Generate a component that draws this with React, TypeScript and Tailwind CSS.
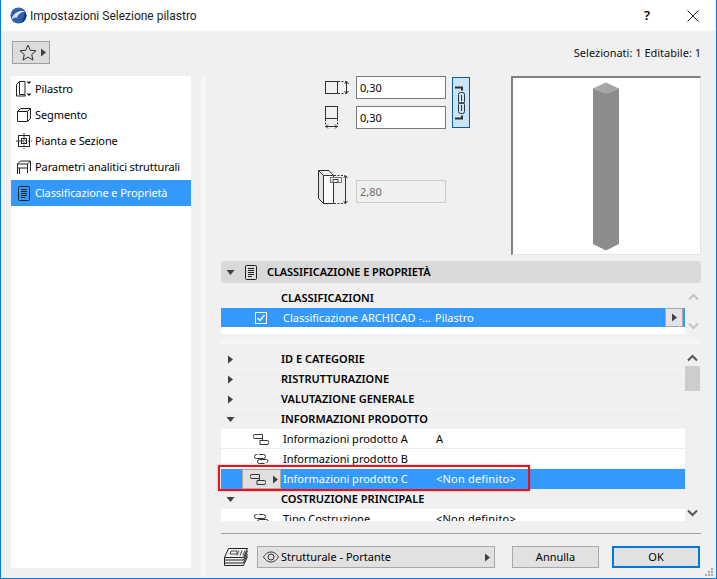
import { ReactNode } from "react"

const FONT = "font-['Noto_Sans','Open_Sans',sans-serif]"

function Tri({ dir, className = "" }: { dir: "right" | "down"; className?: string }) {
  return (
    <svg width="9" height="9" viewBox="0 0 9 9" className={className}>
      {dir === "right" ? <path d="M2 0.5 L7 4.500 L2 8.500 Z" fill="#404040" /> : <path d="M0.500 2 L8.500 2 L4.500 7 Z" fill="#404040" />}
    </svg>
  )
}

function Chevron({ up, color }: { up?: boolean; color: string }) {
  return (
    <svg width="11" height="8" viewBox="0 0 11 8">
      <path d={up ? "M1 6.500 L5.500 2 L10 6.500" : "M1 1.500 L5.500 6 L10 1.500"} fill="none" stroke={color} strokeWidth="2" />
    </svg>
  )
}

function Logo() {
  return (
    <svg width="17" height="17" viewBox="0 0 17 17">
      <circle cx="8.500" cy="8.500" r="8" fill="#2f5fb0" />
      <path d="M1 13 C4 5 10 3 15 4.500 C11 5 8 7 7 11 C5 10 3 11 1 13 Z" fill="#dfe9f7" />
      <path d="M11 16 C13 12 14 8 15 5 L16.500 8 C16.500 12 14 15 11 16 Z" fill="#173a7a" />
    </svg>
  )
}

function DocIcon() {
  return (
    <svg width="14" height="17" viewBox="0 0 14 17" fill="none" stroke="#222">
      <rect x="1.500" y="1.500" width="11" height="14" rx="1" />
      <path d="M4 4.500h6M4 6.500h6M4 8.500h6M4 10.500h6M4 12.500h4" />
    </svg>
  )
}

const navIcons: Record<string, ReactNode> = {
  Pilastro: (
    <svg width="17" height="18" viewBox="0 0 17 18" fill="none" stroke="#222">
      <path d="M4.500 1.500h5.500v13H4.500zM1.500 4.500l3-3M1.500 4.500v11.500h9l-1-1.500" />
      <path d="M11.500 1.500h5l-2.500 2.500zM11.500 13.500h5l-2.500 2.500z" fill="#222" stroke="none" />
    </svg>
  ),
  Segmento: (
    <svg width="16" height="16" viewBox="0 0 16 16" fill="none" stroke="#222">
      <path d="M1.500 4.500l3-3h10v10l-3 3h-10zM1.500 4.500h10v10M11.500 4.500l3-3" />
      <path d="M4 2.500l-1 1M7 2.500l-1 1M10 2.500l-1 1M13 2.500l-1 1" stroke="#777" />
    </svg>
  ),
  "Pianta e Sezione": (
    <svg width="16" height="16" viewBox="0 0 16 16" fill="none" stroke="#222">
      <rect x="2.500" y="2.500" width="11" height="11" />
      <rect x="5.500" y="5.500" width="5" height="5" />
      <path d="M8 0v16M0 8h16" strokeDasharray="2 1" strokeWidth="0.900" />
    </svg>
  ),
  "Parametri analitici strutturali": (
    <svg width="16" height="16" viewBox="0 0 16 16" fill="none" stroke="#222">
      <path d="M1.500 15V5l3-3h10v10M1.500 5h10v5M1.500 9h10M11.500 5l3-3M3.500 9v6M11.500 9v5" />
    </svg>
  ),
  "Classificazione e Proprietà": <DocIcon />,
}

const navItems = ["Pilastro", "Segmento", "Pianta e Sezione", "Parametri analitici strutturali", "Classificazione e Proprietà"]

function SizeIconH() {
  return (
    <svg width="26" height="14" viewBox="0 0 26 14" fill="none" stroke="#2b3338">
      <rect x="0.500" y="0.500" width="12" height="12" />
      <path d="M13 0.500h8M13 12.500h8" strokeDasharray="2 1.500" />
      <path d="M21.500 1v11M19.500 3l2-2.500 2 2.500M19.500 10l2 2.500 2-2.500" />
    </svg>
  )
}

function SizeIconV() {
  return (
    <svg width="14" height="24" viewBox="0 0 14 24" fill="none" stroke="#2b3338">
      <rect x="0.500" y="0.500" width="12" height="12" />
      <path d="M0.500 13v8M12.500 13v8" strokeDasharray="2 1.500" />
      <path d="M1 20.500h11M3 18.500l-2 2 2 2M10 18.500l2 2-2 2" />
    </svg>
  )
}

function HeightIcon() {
  return (
    <svg width="31" height="34" viewBox="0 0 31 34" fill="none" stroke="#2b3338">
      <path d="M0.500 0.500l5 5V33.500l-5-5z" fill="#e4e4e4" />
      <path d="M0.500 0.500h10.500l4.500 5H5.500z" fill="#f6f6f6" />
      <path d="M5.500 5.500h10V33.500H5.500z" fill="#fafafa" />
      <path d="M16 5.500h11M16 33.500h11" strokeDasharray="2 1.500" />
      <path d="M27.500 6v27M25.500 8l2-2.500 2 2.500M25.500 31l2 2.500 2-2.500" />
      <rect x="12.500" y="7.500" width="11" height="5" fill="#f0f0f0" stroke="#777" />
      <path d="M15 9.500h5v3h-5z" stroke="#444" />
    </svg>
  )
}

function LinkOpen() {
  return (
    <svg width="16" height="11" viewBox="0 0 16 11" fill="none" stroke="#333">
      <path d="M2 0.500h7.500v4H2a2 2 0 0 1 0-4zM7 6.500h7a2 2 0 0 1 0 4H7v-4zM9.500 4.500v2" />
    </svg>
  )
}

function LinkClosed() {
  return (
    <svg width="15" height="10" viewBox="0 0 15 10" fill="none" stroke="#333">
      <path d="M5 0.500h4.500a2 2 0 0 1 0 4H2.500a1.500 1.500 0 0 1-0-4h1M10.500 9.500H5.500a2 2 0 0 1 0-4h7a1.500 1.500 0 0 1 0 3" />
    </svg>
  )
}

function VLink() {
  return (
    <svg width="12" height="34" viewBox="0 0 12 34" fill="none" stroke="#2b3338">
      <path d="M0 1.500h7v3M0 32.500h7v-3" strokeWidth="2" />
      <rect x="3.500" y="6.500" width="6" height="11" rx="2" />
      <rect x="3.500" y="16.500" width="6" height="11" rx="2" />
      <path d="M6.500 9v6M6.500 19v6" />
    </svg>
  )
}

function GroupRow({ label, open }: { label: string; open?: boolean }) {
  return (
    <div className="flex h-5 shrink-0 items-center border-b border-[#f5f5f5] bg-[#f0f0f0] pt-[1px]">
      <div className="flex w-[60px] pl-[5px]">
        <Tri dir={open ? "down" : "right"} />
      </div>
      <span className="text-[11px] font-semibold text-black">{label}</span>
    </div>
  )
}

function ItemRow({ label, value, open }: { label: string; value?: string; open?: boolean }) {
  return (
    <div className="flex h-5 shrink-0 items-center border-b border-[#eeeeee] bg-white pt-[1px]">
      <div className="flex w-[60px] justify-center pl-[20px]">{open ? <LinkOpen /> : <LinkClosed />}</div>
      <span className="ml-[2px] w-[153px] text-[11px] text-black">{label}</span>
      <span className="text-[11px] tracking-[0.2px] text-black">{value}</span>
    </div>
  )
}

export default function App() {
  return (
    <div className={`${FONT} relative flex h-[579px] w-[717px] flex-col overflow-hidden border-x border-b border-[#0a7bd6] bg-[#f0f0f0] text-black`}>
      {/* title bar */}
      <div className="flex h-[31px] shrink-0 items-center bg-white pl-[9px]">
        <Logo />
        <span className="ml-[3px] font-['Roboto',sans-serif] text-[12px] text-[#222]">Impostazioni Selezione pilastro</span>
        <span className="ml-auto mr-[37px] text-[13px] font-semibold">?</span>
        <svg width="12" height="12" viewBox="0 0 12 12" className="mr-[17px]" stroke="#222" fill="none">
          <path d="M0.500 0.500l11 11M11.500 0.500l-11 11" />
        </svg>
      </div>

      {/* star + selection count */}
      <div className="flex h-[45px] shrink-0 items-center justify-between pl-[11px] pr-[15px]">
        <div className="mt-[-3px] flex h-[23px] w-[38px] items-center gap-[2px] border border-[#a0a0a0] bg-[#dcdcdc] pl-[6px]">
          <svg width="18" height="17" viewBox="0 0 18 17" fill="none" stroke="#333">
            <path d="M9 1l2.300 5.300 5.700.5-4.300 3.700 1.300 5.600L9 13.100 4 16.100l1.300-5.600L1 6.800l5.700-.5z" />
          </svg>
          <Tri dir="right" />
        </div>
        <span className="text-[11px] text-[#111]">Selezionati: 1 Editabile: 1</span>
      </div>

      <div className="flex min-h-0 flex-1">
        {/* sidebar */}
        <div className="mb-[10px] ml-[10px] w-[180px] shrink-0 bg-white">
          {navItems.map((item, i) => {
            const active = i === 4
            return (
              <div key={item} className={`flex h-[26px] items-center ${active ? "bg-[#3399ff] text-white" : "text-black"}`}>
                <div className="flex w-[24px] justify-center pl-[1px]">{navIcons[item]}</div>
                <span className="text-[11px] tracking-[-0.1px]">{item}</span>
              </div>
            )
          })}
        </div>

        <div className="ml-[10px] w-[5px] shrink-0 bg-[#f5f5f5]" />

        {/* right panel */}
        <div className="ml-[15px] flex w-[480px] shrink-0 flex-col">
          <div className="flex h-[179px] shrink-0">
            <div className="flex w-[290px] flex-col">
              <div className="flex">
                <div className="flex w-[135px] flex-col items-end">
                  <div className="flex h-[23px] w-[31px] items-center pt-[1px]">
                    <SizeIconH />
                  </div>
                  <div className="mt-[7px] flex h-[23px] w-[31px]">
                    <SizeIconV />
                  </div>
                </div>
                <div className="flex flex-col gap-[7px]">
                  <div className="flex h-[23px] w-[90px] items-center border border-[#7a7a7a] bg-white pl-[3px] pt-[2px] text-[11px]">0,30</div>
                  <div className="flex h-[23px] w-[90px] items-center border border-[#7a7a7a] bg-white pl-[3px] pt-[2px] text-[11px]">0,30</div>
                </div>
                <div className="ml-[6px] mt-[1px] flex h-[51px] w-[18px] items-center justify-center border border-[#0b5a9e] bg-[#cce4f7]">
                  <VLink />
                </div>
              </div>
              <div className="mt-[41px] flex items-end">
                <div className="flex w-[135px] justify-end">
                  <div className="w-[38px]">
                    <HeightIcon />
                  </div>
                </div>
                <div className="mb-[1px] flex h-[23px] w-[90px] items-center border border-[#cccccc] bg-[#f0f0f0] pl-[3px] pt-[2px] text-[11px] text-[#6d6d6d]">2,80</div>
              </div>
            </div>
            <div className="flex w-[190px] items-start justify-center border-2 border-r border-b border-[#808080] border-r-[#e3e3e3] border-b-[#e3e3e3] bg-white pr-[2px]">
              <svg width="28" height="170" viewBox="0 0 28 170" className="mt-[4px]">
                <path d="M1 6.500 L14 0.500 L27 6.500 L14 11.500 Z" fill="#a5a5a5" />
                <path d="M1 6.500 L14 11.500 L27 6.500 V162 L14 168.500 L1 162 Z" fill="#8c8c8c" />
              </svg>
            </div>
          </div>

          {/* section header */}
          <div className="mt-[6px] flex h-[22px] shrink-0 items-center rounded-[3px] bg-[#d9d9d9] pl-[5px]">
            <Tri dir="down" />
            <div className="ml-[9px] flex w-[14px]">
              <DocIcon />
            </div>
            <span className="ml-[9px] text-[11px] font-semibold tracking-[-0.1px]">CLASSIFICAZIONE E PROPRIETÀ</span>
          </div>

          {/* classification list */}
          <div className="mt-[5px] flex h-[46px] shrink-0">
            <div className="flex w-[464px] flex-col bg-white">
              <div className="flex h-5 items-center bg-[#f0f0f0] pl-[60px] text-[11px] font-semibold">CLASSIFICAZIONI</div>
              <div className="flex h-[19px] items-center bg-[#3399ff] text-white">
                <div className="flex w-[62px] justify-end pr-[16px]">
                  <svg width="12" height="12" viewBox="0 0 12 12" fill="none" stroke="#fff">
                    <rect x="0.500" y="0.500" width="11" height="11" />
                    <path d="M2.500 6l2.500 2.500 4.500-5.500" strokeWidth="1.500" />
                  </svg>
                </div>
                <span className="mt-[2px] w-[152px] truncate text-[11px]">Classificazione ARCHICAD -...</span>
                <span className="mt-[2px] text-[11px]">Pilastro</span>
                <div className="ml-auto mr-[2px] flex h-[19px] w-[18px] items-center justify-center border border-[#a8a8a8] bg-[#e4e4e4]">
                  <Tri dir="right" />
                </div>
              </div>
            </div>
            <div className="flex w-[16px] flex-col items-center justify-between pb-[4px] pt-[5px]">
              <Chevron up color="#c4c4c4" />
              <Chevron color="#c4c4c4" />
            </div>
          </div>

          <div className="mt-[5px] h-[5px] shrink-0 bg-[#f5f5f5]" />

          {/* property list */}
          <div className="relative mt-[5px] flex h-[172px] shrink-0">
            <div className="flex w-[464px] flex-col overflow-hidden bg-white">
              <GroupRow label="ID E CATEGORIE" />
              <GroupRow label="RISTRUTTURAZIONE" />
              <GroupRow label="VALUTAZIONE GENERALE" />
              <GroupRow label="INFORMAZIONI PRODOTTO" open />
              <ItemRow label="Informazioni prodotto A" value="A" open />
              <ItemRow label="Informazioni prodotto B" />
              <div className="flex h-5 shrink-0 items-center bg-[#3399ff] text-white">
                <div className="ml-[21px] flex h-[20px] w-[39px] items-center border border-[#a8a8a8] bg-[#e0e0e0] pl-[7px]">
                  <LinkOpen />
                  <Tri dir="right" className="ml-[5px]" />
                </div>
                <span className="ml-[2px] w-[153px] text-[11px]">Informazioni prodotto C</span>
                <span className="text-[11px] tracking-[0.2px]">&lt;Non definito&gt;</span>
              </div>
              <GroupRow label="COSTRUZIONE PRINCIPALE" open />
              <ItemRow label="Tipo Costruzione" value="<Non definito>" />
            </div>
            <div className="flex w-[15px] flex-col items-center bg-[#f0f0f0]">
              <div className="flex h-[17px] items-center">
                <Chevron up color="#555" />
              </div>
              <div className="h-[25px] w-full bg-[#cdcdcd]" />
              <div className="mt-auto flex h-[17px] items-center">
                <Chevron color="#555" />
              </div>
            </div>
            {/* red callout */}
            <div className="absolute left-[-3px] top-[116px] h-[26px] w-[312px] border-2 border-[#e8121c] shadow-[0_0_2px_rgba(232,18,28,0.4)]" />
          </div>

          <div className="mt-[12px] h-px shrink-0 bg-[#a0a0a0]" />

          {/* bottom bar */}
          <div className="mt-[12px] flex shrink-0 items-center">
            <div className="ml-[2px] flex w-[34px]">
              <svg width="26" height="20" viewBox="0 0 26 20" fill="none" stroke="#222">
                <path d="M5.500 1.500h19l-4 9h-19z" />
                <path d="M8 4h6v3H7zM16 3.500l-2 5M19 3.500l-2 5M22 3.500l-2 5" strokeWidth="0.800" />
                <path d="M1.500 10.500v2.500h19l4-9M1.500 13v3h19l4-9M1.500 16v2.500h19l4-9" />
              </svg>
            </div>
            <div className="flex h-[22px] w-[238px] items-center border border-[#a8a8a8] bg-[#e1e1e1] pl-[5px] pr-[2px]">
              <svg width="16" height="12" viewBox="0 0 16 12" fill="none" stroke="#333">
                <path d="M0.500 6C3 2 5.500 1 8 1s5 1 7.500 5C13 10 10.500 11 8 11S3 10 0.500 6z" />
                <circle cx="8" cy="6" r="3" />
              </svg>
              <span className="ml-[2px] text-[11px]">Strutturale - Portante</span>
              <Tri dir="right" className="ml-auto" />
            </div>
            <div className="ml-[17px] flex h-[22px] w-[87px] items-center justify-center border border-[#a8a8a8] bg-[#e1e1e1] text-[11px]">Annulla</div>
            <div className="ml-[13px] flex h-[22px] w-[88px] items-center justify-center border-2 border-[#0078d7] bg-[#e1e1e1] text-[11px]">OK</div>
          </div>
        </div>
      </div>

      {/* resize grip */}
      <svg width="9" height="9" viewBox="0 0 9 9" className="absolute bottom-[1px] right-[2px]" fill="#a8a8a8">
        <rect x="6" y="0" width="2" height="2" />
        <rect x="3" y="3" width="2" height="2" />
        <rect x="6" y="3" width="2" height="2" />
        <rect x="0" y="6" width="2" height="2" />
        <rect x="3" y="6" width="2" height="2" />
        <rect x="6" y="6" width="2" height="2" />
      </svg>
    </div>
  )
}
